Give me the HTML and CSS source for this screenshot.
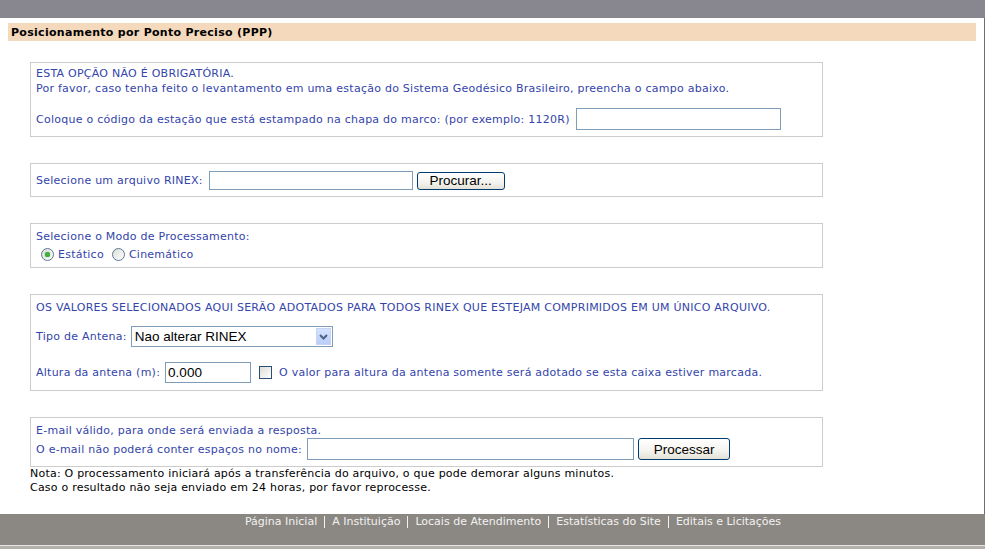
FILE: index.html
```html
<!DOCTYPE html>
<html lang="pt">
<head>
<meta charset="utf-8">
<title>Posicionamento por Ponto Preciso (PPP)</title>
<link rel="stylesheet" href="styles.css">
</head>
<body>
<div class="topbar"></div>
<div class="main">
  <div class="titlebar">Posicionamento por Ponto Preciso (PPP)</div>
  <form class="ppp">
    <div class="box box-station">
      <p class="lines">ESTA OPÇÃO NÃO É OBRIGATÓRIA.<br>Por favor, caso tenha feito o levantamento em uma estação do Sistema Geodésico Brasileiro, preencha o campo abaixo.</p>
      <div class="row row-station">
        <span class="label">Coloque o código da estação que está estampado na chapa do marco: (por exemplo: 1120R)</span>
        <input type="text" class="txt txt-station">
      </div>
    </div>

    <div class="box box-file">
      <div class="row row-file">
        <span class="label">Selecione um arquivo RINEX:</span>
        <input type="text" class="txt txt-file">
        <button type="button" class="btn btn-browse">Procurar...</button>
      </div>
    </div>

    <div class="box box-mode">
      <p class="line">Selecione o Modo de Processamento:</p>
      <div class="row row-mode">
        <label class="opt"><input type="radio" name="modo" class="radio" checked>Estático</label>
        <label class="opt"><input type="radio" name="modo" class="radio">Cinemático</label>
      </div>
    </div>

    <div class="box box-antenna">
      <p class="line">OS VALORES SELECIONADOS AQUI SERÃO ADOTADOS PARA TODOS RINEX QUE ESTEJAM COMPRIMIDOS EM UM ÚNICO ARQUIVO.</p>
      <div class="row row-type">
        <span class="label">Tipo de Antena:</span>
        <span class="select-wrap">
          <select class="sel"><option>Nao alterar RINEX</option></select>
          <span class="sel-arrow"><svg width="9" height="6" viewBox="0 0 9 6"><path d="M1 1 L4.5 4.5 L8 1" fill="none" stroke="#4d6185" stroke-width="2"/></svg></span>
        </span>
      </div>
      <div class="row row-height">
        <span class="label">Altura da antena (m):</span>
        <input type="text" class="txt txt-height" value="0.000">
        <label class="opt opt-check"><input type="checkbox" class="check">O valor para altura da antena somente será adotado se esta caixa estiver marcada.</label>
      </div>
    </div>

    <div class="box box-email">
      <p class="line">E-mail válido, para onde será enviada a resposta.</p>
      <div class="row row-email">
        <span class="label">O e-mail não poderá conter espaços no nome:</span>
        <input type="text" class="txt txt-email">
        <button type="button" class="btn btn-submit">Processar</button>
      </div>
    </div>
  </form>
  <p class="note">Nota: O processamento iniciará após a transferência do arquivo, o que pode demorar alguns minutos.<br>Caso o resultado não seja enviado em 24 horas, por favor reprocesse.</p>
</div>
<div class="footer">
  <nav class="links">
    <a href="#">Página Inicial</a>
    <a href="#">A Instituição</a>
    <a href="#">Locais de Atendimento</a>
    <a href="#">Estatísticas do Site</a>
    <a href="#">Editais e Licitações</a>
  </nav>
</div>
<div class="footer-base"></div>
</body>
</html>
```
FILE: styles.css
```css
* { box-sizing: border-box; }
html, body { margin: 0; padding: 0; }
body {
  width: 985px;
  height: 549px;
  overflow: hidden;
  background: #ffffff;
  font-family: "DejaVu Sans", Verdana, sans-serif;
  font-size: 11px;
  color: #000;
}
.topbar {
  height: 18px;
  background: #88868f;
}
.main {
  border-right: 1px solid #6e6e6e;
  padding: 5px 8px 20px 8px;
}
.titlebar {
  height: 18px;
  line-height: 18px;
  padding: 1px 0 0 3px;
  background: #f5d9bc;
  font-weight: bold;
  font-size: 11px;
  letter-spacing: 0.29px;
}
.ppp {
  margin: 21px 0 0 22px;
  width: 793px;
  display: flex;
  flex-direction: column;
  gap: 26px;
  color: #3344aa;
  letter-spacing: 0.25px;
}
.box {
  border: 1px solid #cccccc;
  padding: 0 5px;
}
.lines, .line {
  margin: 0;
  line-height: 15px;
}
.row {
  display: flex;
  align-items: center;
}
.label { white-space: nowrap; }

.box-station { height: 75px; padding-top: 3px; }
.row-station { margin-top: 12px; height: 22px; gap: 6px; }
.txt {
  border: 1px solid #7f9db9;
  background: #fff;
  font-family: "Liberation Sans", Arial, sans-serif;
  font-size: 13.5px;
  letter-spacing: 0;
  padding: 1px 2px;
  margin: 0;
  color: #000;
}
.txt-station { width: 205px; height: 22px; }

.box-file { height: 34px; padding-top: 7px; }
.row-file { height: 19px; gap: 6px; }
.txt-file { width: 204px; height: 19px; }
.btn {
  border: 1px solid #003c74;
  border-radius: 3px;
  background: linear-gradient(#ffffff, #f4f3ee 60%, #e3e1d6);
  font-family: "Liberation Sans", Arial, sans-serif;
  font-size: 13.5px;
  letter-spacing: 0;
  color: #000;
  padding: 0;
  margin: 0;
}
.btn-browse { width: 88px; height: 18px; line-height: 15px; margin-left: -2px; }

.box-mode { height: 45px; padding-top: 5px; }
.row-mode { height: 20px; }
.opt { display: inline-flex; align-items: center; }
.radio, .check {
  appearance: none;
  -webkit-appearance: none;
  width: 13px;
  height: 13px;
  margin: 0 4px 0 5px;
  border: 1px solid #1c5180;
  background: linear-gradient(135deg, #dcdcd7, #ffffff);
  position: relative;
  flex: none;
}
.radio { border-radius: 50%; border-color: #5a7a96; }
.radio:checked::after {
  content: "";
  position: absolute;
  left: 3px; top: 3px;
  width: 5px; height: 5px;
  border-radius: 50%;
  background: #3fb13f;
  box-shadow: 0 0 1px #1d8a1d;
}
.opt + .opt .radio { margin-left: 8px; }
.check { border-color: #2a4f74; }

.box-antenna { height: 97px; padding-top: 5px; }
.row-type { margin-top: 11px; height: 21px; gap: 4px; }
.select-wrap { position: relative; display: inline-block; width: 202px; height: 21px; }
.sel {
  appearance: none;
  -webkit-appearance: none;
  width: 202px;
  height: 21px;
  border: 1px solid #7f9db9;
  background: #fff;
  font-family: "Liberation Sans", Arial, sans-serif;
  font-size: 13.5px;
  letter-spacing: 0;
  padding: 0 0 0 3px;
  margin: 0;
  color: #000;
  border-radius: 0;
}
.sel-arrow {
  position: absolute;
  right: 2px; top: 2px;
  width: 15px; height: 17px;
  background: linear-gradient(#d6e2fd, #b9cdf9);
  border: 1px solid #c4d3f6;
  display: flex;
  align-items: center;
  justify-content: center;
  pointer-events: none;
}
.row-height { margin-top: 15px; height: 21px; gap: 5px; }
.txt-height { width: 86px; height: 21px; }
.opt-check .check { margin: 0 7px 0 3px; }

.box-email { height: 50px; padding-top: 5px; }
.row-email { height: 22px; gap: 5px; }
.txt-email { width: 327px; height: 22px; }
.btn-submit { width: 92px; height: 22px; margin-left: -1px; }

.note {
  margin: 0 0 0 22px;
  line-height: 13.5px;
  color: #000;
  letter-spacing: 0.22px;
}
.footer {
  height: 32px;
  background: #8b8782;
  border-bottom: 1px solid #e6e6e6;
  padding: 2px 0 0 41px;
}
.links {
  display: flex;
  justify-content: center;
}
.links a {
  color: #f2f2f2;
  text-decoration: none;
  line-height: 12px;
  padding: 0 7px;
  border-left: 1px solid #f2f2f2;
}
.links a:first-child { border-left: none; }
.footer-base {
  height: 3px;
  background: #b3b0aa;
}
```
